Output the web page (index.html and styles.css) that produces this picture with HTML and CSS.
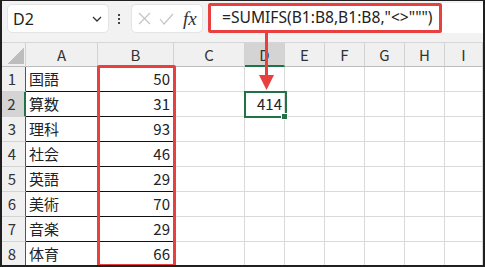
FILE: index.html
```html
<!DOCTYPE html>
<html lang="ja">
<head>
  <meta charset="UTF-8">
  <title>SUMIFS</title>
  <link rel="stylesheet" href="styles.css">
</head>
<body>

<div class="frame">
  <div class="toolbar">
    <div class="namebox">
      <span class="name">D2</span>
      <svg class="chevron" width="10" height="6" viewBox="0 0 10 6"><polyline points="1,1 5,5 9,1" fill="none" stroke="#333" stroke-width="1.3"/></svg>
    </div>
    <div class="dots"><i></i><i></i><i></i></div>
    <div class="fxbox">
      <svg class="icon" width="13" height="13" viewBox="0 0 13 13"><path d="M1 1 L12 12 M12 1 L1 12" stroke="#c4c4c4" stroke-width="1.2" fill="none"/></svg>
      <svg class="icon" width="15" height="12" viewBox="0 0 15 12"><polyline points="1,6 5,11 14,1" stroke="#c4c4c4" stroke-width="1.2" fill="none"/></svg>
      <span class="fx">fx</span>
    </div>
    <div class="formula">
      <div class="formula-text">=SUMIFS(B1:B8,B1:B8,"&lt;&gt;""")</div>
    </div>
  </div>

  <div class="sheet">
    <div class="c h corner"></div>
    <div class="c h">A</div>
    <div class="c h">B</div>
    <div class="c h">C</div>
    <div class="c h on">D</div>
    <div class="c h">E</div>
    <div class="c h">F</div>
    <div class="c h">G</div>
    <div class="c h">H</div>
    <div class="c h">I</div>

    <div class="c rh">1</div><div class="c t">国語</div><div class="c n">50</div><div class="c"></div><div class="c"></div><div class="c"></div><div class="c"></div><div class="c"></div><div class="c"></div><div class="c"></div>
    <div class="c rh on">2</div><div class="c t">算数</div><div class="c n">31</div><div class="c"></div><div class="c n sel">414<span class="handle"></span></div><div class="c"></div><div class="c"></div><div class="c"></div><div class="c"></div><div class="c"></div>
    <div class="c rh">3</div><div class="c t">理科</div><div class="c n">93</div><div class="c"></div><div class="c"></div><div class="c"></div><div class="c"></div><div class="c"></div><div class="c"></div><div class="c"></div>
    <div class="c rh">4</div><div class="c t">社会</div><div class="c n">46</div><div class="c"></div><div class="c"></div><div class="c"></div><div class="c"></div><div class="c"></div><div class="c"></div><div class="c"></div>
    <div class="c rh">5</div><div class="c t">英語</div><div class="c n">29</div><div class="c"></div><div class="c"></div><div class="c"></div><div class="c"></div><div class="c"></div><div class="c"></div><div class="c"></div>
    <div class="c rh">6</div><div class="c t">美術</div><div class="c n">70</div><div class="c"></div><div class="c"></div><div class="c"></div><div class="c"></div><div class="c"></div><div class="c"></div><div class="c"></div>
    <div class="c rh">7</div><div class="c t">音楽</div><div class="c n">29</div><div class="c"></div><div class="c"></div><div class="c"></div><div class="c"></div><div class="c"></div><div class="c"></div><div class="c"></div>
    <div class="c rh">8</div><div class="c t">体育</div><div class="c n">66</div><div class="c"></div><div class="c"></div><div class="c"></div><div class="c"></div><div class="c"></div><div class="c"></div><div class="c"></div>

    <div class="range-mark"></div>
  </div>

  <svg class="arrow" width="18" height="58" viewBox="0 0 18 58">
    <line x1="8.5" y1="0" x2="8.5" y2="44" stroke="#e8403f" stroke-width="3"/>
    <polygon points="1,42 16,42 8.5,57" fill="#e8403f"/>
  </svg>
</div>

</body>
</html>
```

FILE: styles.css
```css
body {
  margin: 0;
  background: #fff;
}

.frame {
  position: relative;
  width: 485px;
  height: 267px;
  box-sizing: border-box;
  border: 2px solid #1f1f1f;
  border-top-width: 1px;
  overflow: hidden;
  background: #fff;
  font-family: "Noto Sans CJK JP", "Noto Sans", sans-serif;
  color: #222;
}

/* formula bar */
.toolbar {
  height: 39px;
  border-bottom: 1px solid #d6d6d6;
  background: #f2f2f2;
  display: flex;
  align-items: flex-start;
  padding-top: 2px;
  box-sizing: content-box;
}

.namebox {
  margin: 1px 0 0 5px;
  width: 102px;
  height: 29px;
  box-sizing: border-box;
  background: #fff;
  border: 1px solid #e4e4e4;
  border-radius: 5px;
  display: flex;
  align-items: center;
  justify-content: space-between;
  padding: 0 6px 0 5px;
}

.name {
  font-family: "Noto Sans", sans-serif;
  font-size: 16px;
  line-height: 20px;
  color: #222;
}

.dots {
  margin: 11px 0 0 9px;
  width: 2px;
  display: flex;
  flex-direction: column;
  gap: 2px;
}

.dots i {
  display: block;
  width: 2px;
  height: 2px;
  background: #444;
}

.fxbox {
  margin: 1px 0 0 11px;
  width: 72px;
  height: 29px;
  box-sizing: border-box;
  background: #fff;
  border: 1px solid #e4e4e4;
  border-radius: 5px;
  display: flex;
  align-items: center;
  padding-left: 6px;
  gap: 8px;
}

.fx {
  font-family: "Liberation Serif", serif;
  font-style: italic;
  font-size: 19px;
  line-height: 20px;
  color: #333;
  margin-left: 1px;
}

.formula {
  margin-left: 5px;
  flex: 1;
  height: 30px;
  background: #fff;
}

.formula-text {
  width: 234px;
  height: 30px;
  box-sizing: border-box;
  border: 3px solid #e8403f;
  border-radius: 2px;
  padding-left: 11px;
  font-family: "Noto Sans", sans-serif;
  font-size: 15.6px;
  line-height: 23px;
  color: #222;
  white-space: nowrap;
}

/* sheet */
.sheet {
  position: relative;
  display: grid;
  grid-template-columns: 24px 72px 76px 71px repeat(5, 40px) 1fr;
  grid-template-rows: 24px repeat(8, 25px);
}

.c {
  box-sizing: border-box;
  border-right: 1px solid #dadada;
  border-bottom: 1px solid #dadada;
  font-size: 15px;
  line-height: 24px;
  white-space: nowrap;
}

.h {
  background: #f0f0f0;
  border-right-color: #d2d2d2;
  border-bottom-color: #bdbdbd;
  text-align: center;
  line-height: 23px;
  color: #333;
}

.corner {
  background-image: linear-gradient(to bottom right, transparent 50%, #bdbdbd 50%);
  background-size: 17px 16px;
  background-position: right 1px bottom 2px;
  background-repeat: no-repeat;
}

.h.on {
  background: #d4d4d4;
  border-bottom: 2px solid #217346;
}

.rh {
  background: #f0f0f0;
  border-right-color: #555;
  border-bottom-color: #d4d4d4;
  text-align: center;
  padding-right: 3px;
  color: #333;
}

.rh.on {
  background: #d4d4d4;
  border-right: 2px solid #217346;
}

.t {
  padding-left: 3px;
  border-right-color: #111;
  border-bottom-color: #111;
}

.n {
  text-align: right;
  padding-right: 3px;
}

.t + .n {
  border-right-color: #111;
  border-bottom-color: #111;
}

.sel {
  position: relative;
  padding-right: 2px;
}

.sel::after {
  content: "";
  position: absolute;
  top: -1px;
  left: -1px;
  width: 43px;
  height: 27px;
  box-sizing: border-box;
  border: 2px solid #217346;
}

.handle {
  position: absolute;
  right: -4px;
  bottom: -4px;
  width: 5px;
  height: 5px;
  background: #217346;
  border: 1px solid #fff;
  z-index: 1;
}

.range-mark {
  position: absolute;
  left: 95px;
  top: 22px;
  width: 79px;
  height: 202px;
  box-sizing: border-box;
  border: 3px solid #e8403f;
  border-radius: 2px;
}

.arrow {
  position: absolute;
  left: 256px;
  top: 32px;
}
```
